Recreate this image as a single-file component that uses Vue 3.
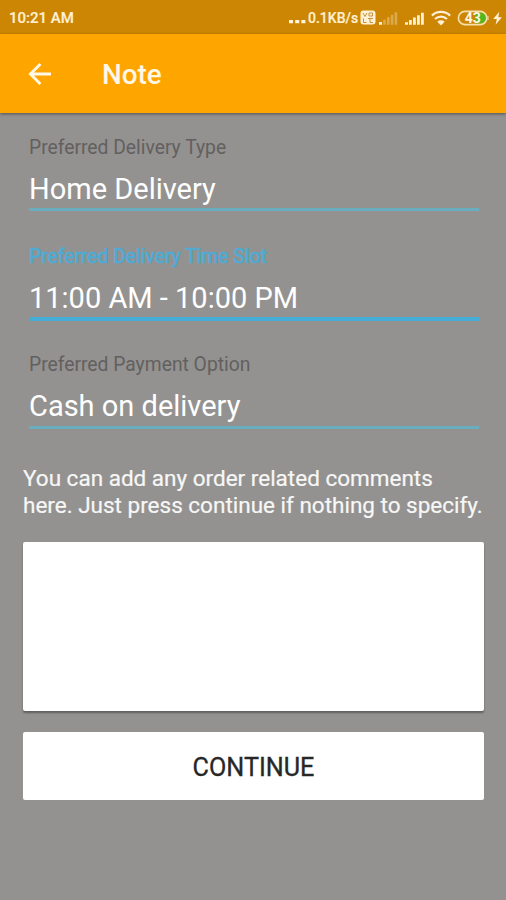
<script setup>
import { ref } from 'vue';

const fields = ref([
  { label: 'Preferred Delivery Type', value: 'Home Delivery', active: false },
  { label: 'Preferred Delivery Time Slot', value: '11:00 AM - 10:00 PM', active: true },
  { label: 'Preferred Payment Option', value: 'Cash on delivery', active: false },
]);

const comment = ref('');
</script>

<template>
  <div class="screen">
    <div class="status-bar">
      <span class="time">10:21 AM</span>
      <div class="status-right">
        <svg class="dots" width="18" height="20" viewBox="0 0 18 20">
          <path d="M0 12h4v3.2H0zM6.2 12h4v3.2h-4zM12.4 12h4v3.2h-4z" fill="#fff3dc" />
        </svg>
        <span class="speed">0.1KB/s</span>
        <svg class="volte" width="16" height="20" viewBox="0 0 16 20">
          <rect x="0.5" y="2.5" width="15" height="14" rx="3" fill="#fff0d5" />
          <path d="M3 5l2 3.5L7 5M9 5h3.5v3H9zM3.5 10.5v4h3M8 10.5h5M10 10.5v4h3" fill="none" stroke="#c5933b" stroke-width="1" />
        </svg>
        <svg class="signal-weak" width="20" height="20" viewBox="0 0 20 20">
          <path d="M1 14h3v2.8H1z" fill="#fff0d5" />
          <path d="M5.2 11.8h2.6v5H5.2zM9 9.3h2.6v7.5H9zM12.8 6.8h2.6v10h-2.6zM16.6 4.3h2.6v12.5h-2.6z" fill="#fff" opacity="0.3" />
        </svg>
        <svg class="signal" width="20" height="20" viewBox="0 0 20 20">
          <path d="M0 14.2h3v2.6H0zM4 12h2.8v4.8H4zM8 9.6h2.8v7.2H8zM12 7.2h2.8v9.6H12zM16 4.8h2.8v12H16z" fill="#fff0d5" />
        </svg>
        <svg class="wifi" width="20" height="20" viewBox="0 0 20 20">
          <path d="M0.9 7.6a13.2 13.2 0 0 1 18.2 0M4 11a8.8 8.8 0 0 1 12 0" fill="none" stroke="#fff0d5" stroke-width="2.3" />
          <path d="M6.3 13.8a5.4 5.4 0 0 1 7.4 0L10 17.6z" fill="#fff0d5" />
        </svg>
        <svg class="battery" width="31" height="20" viewBox="0 0 31 20">
          <path d="M18 4.6h4.5a5.4 5.4 0 0 1 0 10.8H18z" fill="#50b81f" />
          <rect x="0.4" y="3.4" width="28.4" height="13.2" rx="6.6" fill="none" stroke="#f6dfad" stroke-width="1.6" />
          <path d="M30 8v4" stroke="#f6dfad" stroke-width="1" />
          <text x="14.8" y="15" text-anchor="middle" class="battery-text">43</text>
        </svg>
        <svg class="bolt" width="9" height="20" viewBox="0 0 9 20">
          <path d="M6.3 3.8L0.2 11h3.6L2.6 16.8L8.9 9.2H5.3z" fill="#fff0d5" />
        </svg>
      </div>
    </div>

    <header class="toolbar">
      <button class="back" aria-label="Back">
        <svg width="24" height="24" viewBox="0 0 24 24">
          <path d="M23 12H2.5M12.4 2L2.4 12L12.4 22" fill="none" stroke="#fff8e8" stroke-width="2.9" />
        </svg>
      </button>
      <h1 class="title">Note</h1>
    </header>

    <main class="content">
      <div
        v-for="field in fields"
        :key="field.label"
        class="field"
        :class="{ active: field.active }"
      >
        <div class="label">{{ field.label }}</div>
        <div class="value">{{ field.value }}</div>
        <div class="underline"></div>
      </div>

      <p class="hint">
        You can add any order related comments<br />
        here. Just press continue if nothing to specify.
      </p>

      <textarea v-model="comment" class="comment" aria-label="Comments"></textarea>
      <button class="continue">CONTINUE</button>
    </main>
  </div>
</template>

<style>
body {
  margin: 0;
  background: #949290;
}
</style>

<style scoped>
.screen {
  height: 900px;
  overflow: hidden;
  background: #949290;
  font-family: Roboto, "Liberation Sans", sans-serif;
}

.status-bar {
  display: flex;
  justify-content: space-between;
  height: 34px;
  padding: 0 4px 0 9px;
  box-sizing: border-box;
  background: #cc8603;
  color: #fff0d5;
  font-weight: 500;
}
.time {
  font-size: 15px;
  line-height: 36px;
  -webkit-text-stroke: 0.2px #fff0d5;
}
.status-right {
  display: flex;
  align-items: center;
  padding-top: 1px;
}
.speed {
  width: 51px;
  margin-left: 1px;
  font-size: 14px;
  line-height: 34px;
  white-space: nowrap;
  -webkit-text-stroke: 0.2px #fff0d5;
}
.volte {
  margin-left: 1px;
}
.signal-weak {
  margin-left: 2px;
}
.signal {
  margin-left: 7px;
}
.wifi {
  margin-left: 6px;
}
.battery {
  margin-left: 7px;
  overflow: visible;
}
.bolt {
  margin-left: 4px;
}
.battery-text {
  fill: #fff6e5;
  font-size: 14px;
  font-weight: 700;
}

.toolbar {
  display: flex;
  align-items: center;
  height: 79px;
  padding-left: 28px;
  background: #ffa500;
  box-shadow: 0 1px 3px rgba(0, 0, 0, 0.45);
}
.back {
  display: flex;
  padding: 0;
  border: none;
  background: none;
}
.title {
  margin: 2px 0 0 50px;
  color: #fff8e8;
  font-size: 27.8px;
  font-weight: 500;
  line-height: 32px;
}

.content {
  padding: 23px 22px 0 23px;
}
.field {
  height: 108.7px;
  margin: 0 5px 0 6px;
}
.label {
  height: 36px;
  color: #62605f;
  font-size: 19.3px;
  line-height: 24px;
}
.value {
  height: 36.2px;
  color: #fff;
  font-size: 29px;
  line-height: 34px;
}
.underline {
  height: 3px;
  background: #68aebf;
}
.active .label {
  color: #4eabd5;
  -webkit-text-stroke: 0.7px #4eabd5;
}
.active .underline {
  height: 4px;
  background: #46acd8;
}

.hint {
  margin: 2.5px 0 23px;
  color: #f7f7f6;
  font-size: 22.5px;
  line-height: 27px;
  white-space: nowrap;
  -webkit-text-stroke: 0.2px #f7f7f6;
}
.comment {
  display: block;
  width: 100%;
  height: 169px;
  padding: 12px;
  box-sizing: border-box;
  border: none;
  border-radius: 2px;
  outline: none;
  resize: none;
  background: #fff;
  box-shadow: 0 2px 2px rgba(0, 0, 0, 0.35);
  font: inherit;
}
.continue {
  display: block;
  width: 100%;
  height: 68px;
  margin-top: 21.6px;
  padding: 2px 0 0;
  border: none;
  border-radius: 2px;
  background: #fff;
  color: #272727;
  font-family: inherit;
  font-size: 25.2px;
  -webkit-text-stroke: 0.3px #272727;
}
</style>
